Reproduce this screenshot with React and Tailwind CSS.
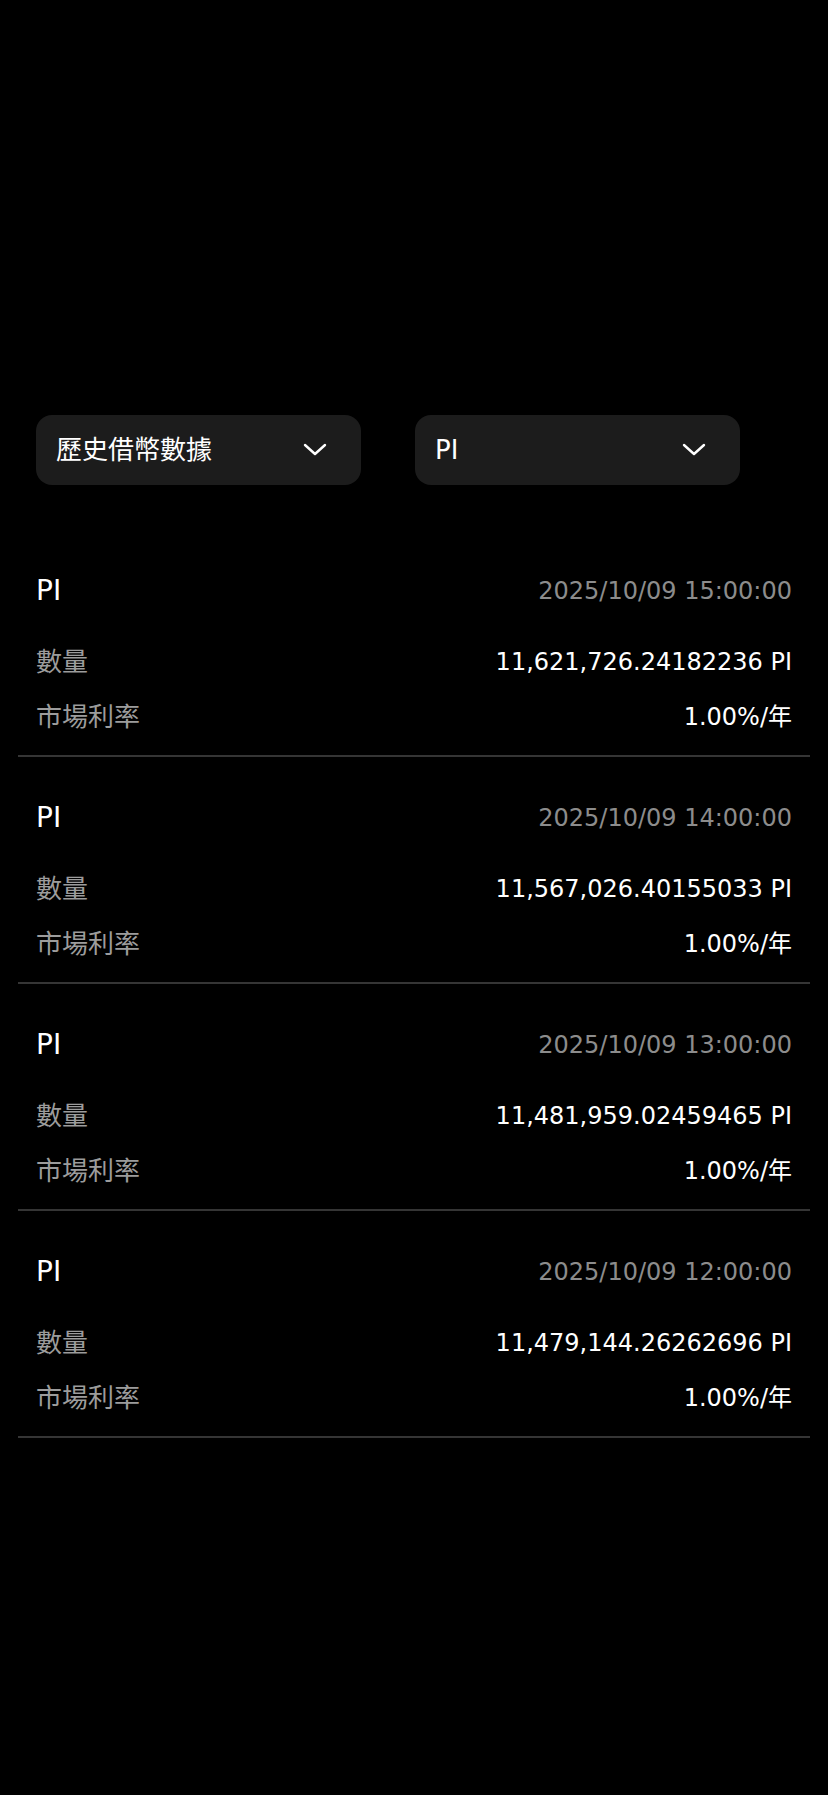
import React from "react";

const records = [
  { time: "2025/10/09 15:00:00", amount: "11,621,726.24182236 PI", rate: "1.00%/年" },
  { time: "2025/10/09 14:00:00", amount: "11,567,026.40155033 PI", rate: "1.00%/年" },
  { time: "2025/10/09 13:00:00", amount: "11,481,959.02459465 PI", rate: "1.00%/年" },
  { time: "2025/10/09 12:00:00", amount: "11,479,144.26262696 PI", rate: "1.00%/年" },
];

const font = { fontFamily: '"DejaVu Sans", "Noto Sans CJK TC", sans-serif' };

function Chevron() {
  return (
    <svg width="24" height="14" viewBox="0 0 24 14" fill="none">
      <polyline points="2,2 12,11 22,2" stroke="#ffffff" strokeWidth="2.4" strokeLinecap="round" strokeLinejoin="round" />
    </svg>
  );
}

function Select({ label }) {
  return (
    <div className="flex h-[70px] w-[325px] items-center justify-between rounded-[16px] bg-[#1c1c1c] pl-[20px] pr-[34px]">
      <span className="text-[26px] text-white">{label}</span>
      <Chevron />
    </div>
  );
}

function Record({ time, amount, rate }) {
  return (
    <div className="border-b-2 border-[#353535] px-[18px] pt-[41px] pb-[18px]">
      <div className="flex h-[40px] items-center justify-between">
        <span className="text-[28px] text-white">PI</span>
        <span className="text-[24px] text-[#8c8c8c]">{time}</span>
      </div>
      <div className="mt-[31px] flex h-[40px] items-center justify-between">
        <span className="text-[26px] text-[#9c9c9c]">數量</span>
        <span className="text-[24px] text-white">{amount}</span>
      </div>
      <div className="mt-[15px] flex h-[40px] items-center justify-between">
        <span className="text-[26px] text-[#9c9c9c]">市場利率</span>
        <span className="text-[24px] text-white">{rate}</span>
      </div>
    </div>
  );
}

export default function App() {
  return (
    <div className="min-h-[1795px] w-full bg-black pt-[415px]" style={font}>
      <div className="flex gap-[54px] px-[36px]">
        <Select label="歷史借幣數據" />
        <Select label="PI" />
      </div>
      <div className="mx-[18px] mt-[45px]">
        {records.map((r) => (
          <Record key={r.time} {...r} />
        ))}
      </div>
    </div>
  );
}
